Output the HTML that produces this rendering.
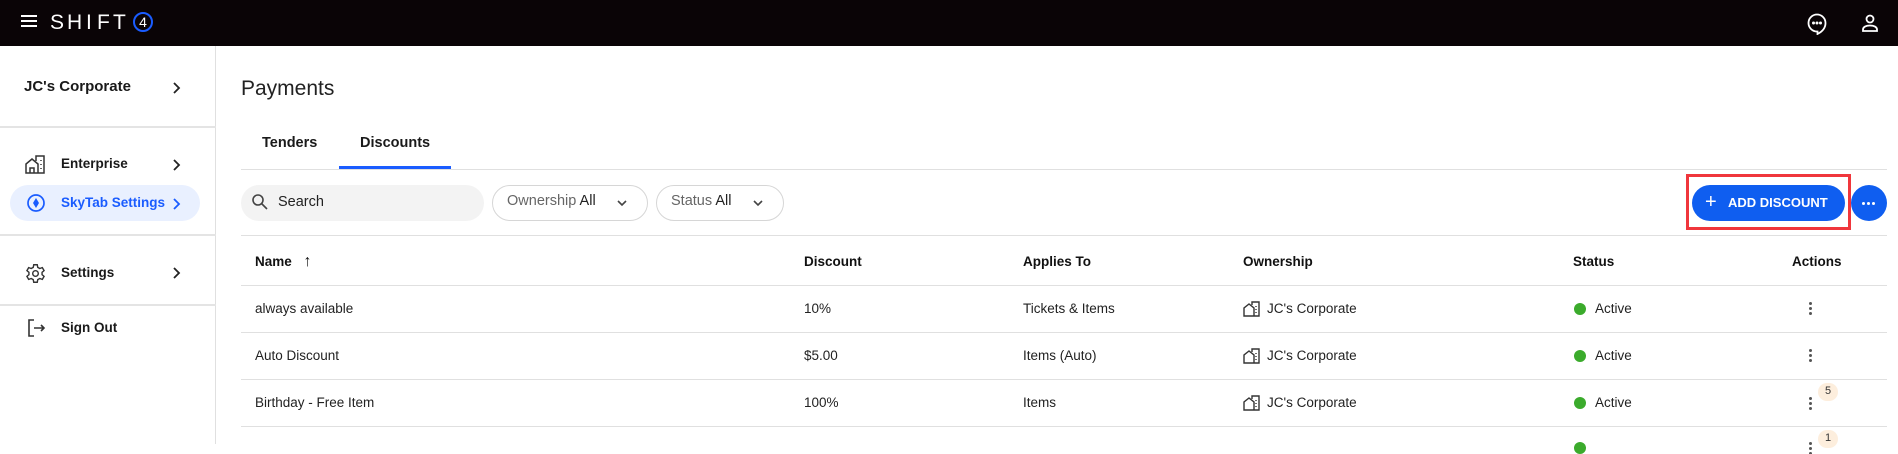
<!DOCTYPE html>
<html><head><meta charset="utf-8"><style>
*{box-sizing:border-box;margin:0;padding:0}
body{width:1898px;height:444px;overflow:hidden;background:#fff;font-family:"Liberation Sans",Arial,sans-serif;color:#1a1a1a;position:relative}
.a{position:absolute}
.hdr{left:0;top:0;width:1898px;height:46px;background:#0a0406}
.side{left:0;top:46px;width:216px;height:398px;border-right:1px solid #e0e0e0}
.hl{height:2px;background:#e4e4e4}
.b{font-weight:bold}
.row{left:241px;width:1646px;height:1px;background:#e0e0e0}
.cell{font-size:13.5px;color:#222}
.th{font-size:13.5px;font-weight:bold;color:#111}
.dot{width:12px;height:12px;border-radius:50%;background:#3bab2c}
.keb{width:3px;height:3px;border-radius:50%;background:#555;box-shadow:0 5px 0 #555,0 10px 0 #555}
.lg{position:absolute;top:11px;color:#fff;font-size:21px;font-weight:300}
</style></head><body>
<div class="a hdr">
  <div class="a" style="left:21px;top:15px;width:16px;height:2px;background:#fff;box-shadow:0 5px 0 #fff,0 10px 0 #fff"></div>
  <span class="lg" style="left:50px">S</span><span class="lg" style="left:67px">H</span><span class="lg" style="left:86px">I</span><span class="lg" style="left:97px">F</span><span class="lg" style="left:113px">T</span>
  <div class="a" style="left:133px;top:12px;width:20px;height:20px;border:2px solid #1a5cff;border-radius:50%;color:#fff;font-size:14px;text-align:center;line-height:16px">4</div>
  <svg class="a" style="left:1805px;top:11px" width="24" height="24" viewBox="0 0 24 24" fill="none" stroke="#fff" stroke-width="1.8"><path d="M12 3.5a8.5 8.5 0 1 0 0 17h0.5v2.5c4-2 8-5.5 8-11A8.5 8.5 0 0 0 12 3.5z"/><circle cx="8.5" cy="12" r=".6" fill="#fff"/><circle cx="12" cy="12" r=".6" fill="#fff"/><circle cx="15.5" cy="12" r=".6" fill="#fff"/></svg>
  <svg class="a" style="left:1858px;top:11px" width="24" height="24" viewBox="0 0 24 24" fill="none" stroke="#fff" stroke-width="1.8"><circle cx="12" cy="8" r="3.5"/><path d="M5 20v-1.5c0-2.5 3-4 7-4s7 1.5 7 4V20z"/></svg>
</div>
<div class="a side">
  <div class="a b" style="left:24px;top:32px;font-size:15px">JC's Corporate</div>
  <svg class="a" style="left:171px;top:35px" width="10" height="14" viewBox="0 0 10 14" fill="none" stroke="#222" stroke-width="1.8"><path d="M3 2l5 5-5 5"/></svg>
  <div class="a hl" style="left:0;top:80px;width:216px"></div>
  <svg class="a" style="left:25px;top:108px" width="21" height="21" viewBox="0 0 21 21" fill="none" stroke="#333" stroke-width="1.5"><path d="M1 19V10l6-5 6 5v9H1zM5 19v-5h4v5M13 19h6V2h-8v5"/><path d="M16 6v1M16 10v1M16 14v1"/></svg>
  <div class="a b" style="left:61px;top:110px;font-size:13.5px">Enterprise</div>
  <svg class="a" style="left:171px;top:112px" width="10" height="14" viewBox="0 0 10 14" fill="none" stroke="#222" stroke-width="1.8"><path d="M3 2l5 5-5 5"/></svg>
  <div class="a" style="left:10px;top:139px;width:190px;height:36px;border-radius:18px;background:#e9f0ff"></div>
  <svg class="a" style="left:26px;top:147px" width="20" height="20" viewBox="0 0 20 20"><circle cx="10" cy="10" r="8" fill="none" stroke="#1a5cff" stroke-width="1.7"/><path d="M10 5l3 5-3 5-3-5z" fill="#1a5cff"/></svg>
  <div class="a b" style="left:61px;top:149px;font-size:13.5px;color:#1a5cff">SkyTab Settings</div>
  <svg class="a" style="left:171px;top:151px" width="10" height="14" viewBox="0 0 10 14" fill="none" stroke="#1a5cff" stroke-width="1.8"><path d="M3 2l5 5-5 5"/></svg>
  <div class="a hl" style="left:0;top:188px;width:216px"></div>
  <svg class="a" style="left:25px;top:217px" width="21" height="21" viewBox="0 0 24 24" fill="none" stroke="#333" stroke-width="1.6"><circle cx="12" cy="12" r="3.2"/><path d="M10 2h4l.6 3 2.3 1.3 2.9-1 2 3.4-2.3 2v2.6l2.3 2-2 3.4-2.9-1-2.3 1.3-.6 3h-4l-.6-3-2.3-1.3-2.9 1-2-3.4 2.3-2v-2.6l-2.3-2 2-3.4 2.9 1L9.4 5z"/></svg>
  <div class="a b" style="left:61px;top:219px;font-size:13.5px">Settings</div>
  <svg class="a" style="left:171px;top:220px" width="10" height="14" viewBox="0 0 10 14" fill="none" stroke="#222" stroke-width="1.8"><path d="M3 2l5 5-5 5"/></svg>
  <div class="a hl" style="left:0;top:258px;width:216px"></div>
  <svg class="a" style="left:26px;top:272px" width="20" height="20" viewBox="0 0 20 20" fill="none" stroke="#333" stroke-width="1.6"><path d="M8 2H3v16h5M8 10h10M15 7l3 3-3 3"/></svg>
  <div class="a b" style="left:61px;top:274px;font-size:13.5px">Sign Out</div>
</div>
<div class="a" style="left:241px;top:77px;font-size:21px;color:#222">Payments</div>
<div class="a b" style="left:262px;top:135px;font-size:14.5px">Tenders</div>
<div class="a b" style="left:360px;top:135px;font-size:14.5px">Discounts</div>
<div class="a row" style="top:169px"></div>
<div class="a" style="left:339px;top:166px;width:112px;height:3px;background:#1a5cff"></div>
<div class="a" style="left:241px;top:185px;width:243px;height:36px;border-radius:18px;background:#f3f3f3"></div>
<svg class="a" style="left:251px;top:193px" width="18" height="18" viewBox="0 0 18 18" fill="none" stroke="#444" stroke-width="1.6"><circle cx="7" cy="7" r="5"/><path d="M11 11l5 5"/></svg>
<div class="a" style="left:278px;top:194px;font-size:14.5px;color:#222">Search</div>
<div class="a" style="left:492px;top:185px;width:156px;height:36px;border-radius:18px;border:1px solid #d6d6d6"></div>
<div class="a" style="left:507px;top:193px;font-size:14.5px;color:#666">Ownership <span style="color:#222">All</span></div>
<svg class="a" style="left:616px;top:199px" width="12" height="8" viewBox="0 0 12 8" fill="none" stroke="#444" stroke-width="1.6"><path d="M2 2l4 4 4-4"/></svg>
<div class="a" style="left:656px;top:185px;width:128px;height:36px;border-radius:18px;border:1px solid #d6d6d6"></div>
<div class="a" style="left:671px;top:193px;font-size:14.5px;color:#666">Status <span style="color:#222">All</span></div>
<svg class="a" style="left:752px;top:199px" width="12" height="8" viewBox="0 0 12 8" fill="none" stroke="#444" stroke-width="1.6"><path d="M2 2l4 4 4-4"/></svg>
<div class="a" style="left:1686px;top:174px;width:165px;height:56px;border:3px solid #f0363c"></div>
<div class="a" style="left:1692px;top:185px;width:153px;height:36px;border-radius:18px;background:#0f5ef0;color:#fff;font-weight:bold;font-size:13px;line-height:36px"><span style="position:absolute;left:13px;top:-1px;font-size:20px;font-weight:normal">+</span><span style="position:absolute;left:36px">ADD DISCOUNT</span></div>
<div class="a" style="left:1851px;top:185px;width:36px;height:36px;border-radius:50%;background:#0f5ef0"></div>
<div class="a" style="left:1862px;top:202px;width:3px;height:3px;border-radius:50%;background:#fff;box-shadow:5px 0 0 #fff,10px 0 0 #fff"></div>
<div class="a row" style="top:235px"></div>
<div class="a th" style="left:255px;top:253px">Name <span style="font-weight:normal;margin-left:8px;font-size:16px">&#8593;</span></div>
<div class="a th" style="left:804px;top:254px">Discount</div>
<div class="a th" style="left:1023px;top:254px">Applies To</div>
<div class="a th" style="left:1243px;top:254px">Ownership</div>
<div class="a th" style="left:1573px;top:254px">Status</div>
<div class="a th" style="left:1792px;top:254px">Actions</div>
<div class="a row" style="top:285px"></div>
<div class="a row" style="top:332px"></div>
<div class="a row" style="top:379px"></div>
<div class="a row" style="top:426px"></div>

<div class="a cell" style="left:255px;top:301px">always available</div>
<div class="a cell" style="left:804px;top:301px">10%</div>
<div class="a cell" style="left:1023px;top:301px">Tickets &amp; Items</div>
<div class="a cell" style="left:255px;top:348px">Auto Discount</div>
<div class="a cell" style="left:804px;top:348px">$5.00</div>
<div class="a cell" style="left:1023px;top:348px">Items (Auto)</div>
<div class="a cell" style="left:255px;top:395px">Birthday - Free Item</div>
<div class="a cell" style="left:804px;top:395px">100%</div>
<div class="a cell" style="left:1023px;top:395px">Items</div>

<svg class="a" style="left:1243px;top:301px" width="18" height="16" viewBox="0 0 18 16" fill="none" stroke="#333" stroke-width="1.4"><path d="M1 15V7l5-4 5 4v8zM11 15h5V1H9v3M13 5v1M13 8v1M13 11v1"/></svg>
<svg class="a" style="left:1243px;top:348px" width="18" height="16" viewBox="0 0 18 16" fill="none" stroke="#333" stroke-width="1.4"><path d="M1 15V7l5-4 5 4v8zM11 15h5V1H9v3M13 5v1M13 8v1M13 11v1"/></svg>
<svg class="a" style="left:1243px;top:395px" width="18" height="16" viewBox="0 0 18 16" fill="none" stroke="#333" stroke-width="1.4"><path d="M1 15V7l5-4 5 4v8zM11 15h5V1H9v3M13 5v1M13 8v1M13 11v1"/></svg>
<div class="a cell" style="left:1267px;top:301px">JC's Corporate</div>
<div class="a cell" style="left:1267px;top:348px">JC's Corporate</div>
<div class="a cell" style="left:1267px;top:395px">JC's Corporate</div>

<div class="a dot" style="left:1574px;top:303px"></div>
<div class="a dot" style="left:1574px;top:350px"></div>
<div class="a dot" style="left:1574px;top:397px"></div>
<div class="a dot" style="left:1574px;top:442px"></div>
<div class="a cell" style="left:1595px;top:301px">Active</div>
<div class="a cell" style="left:1595px;top:348px">Active</div>
<div class="a cell" style="left:1595px;top:395px">Active</div>

<div class="a keb" style="left:1809px;top:302px"></div>
<div class="a keb" style="left:1809px;top:349px"></div>
<div class="a keb" style="left:1809px;top:397px"></div>
<div class="a keb" style="left:1809px;top:442px"></div>
<div class="a" style="left:1818px;top:383px;width:20px;height:18px;border-radius:9px;background:#fdeedd;font-size:11px;text-align:center;line-height:16px;color:#333">5</div>
<div class="a" style="left:1818px;top:430px;width:20px;height:18px;border-radius:9px;background:#fdeedd;font-size:11px;text-align:center;line-height:16px;color:#333">1</div>
</body></html>
